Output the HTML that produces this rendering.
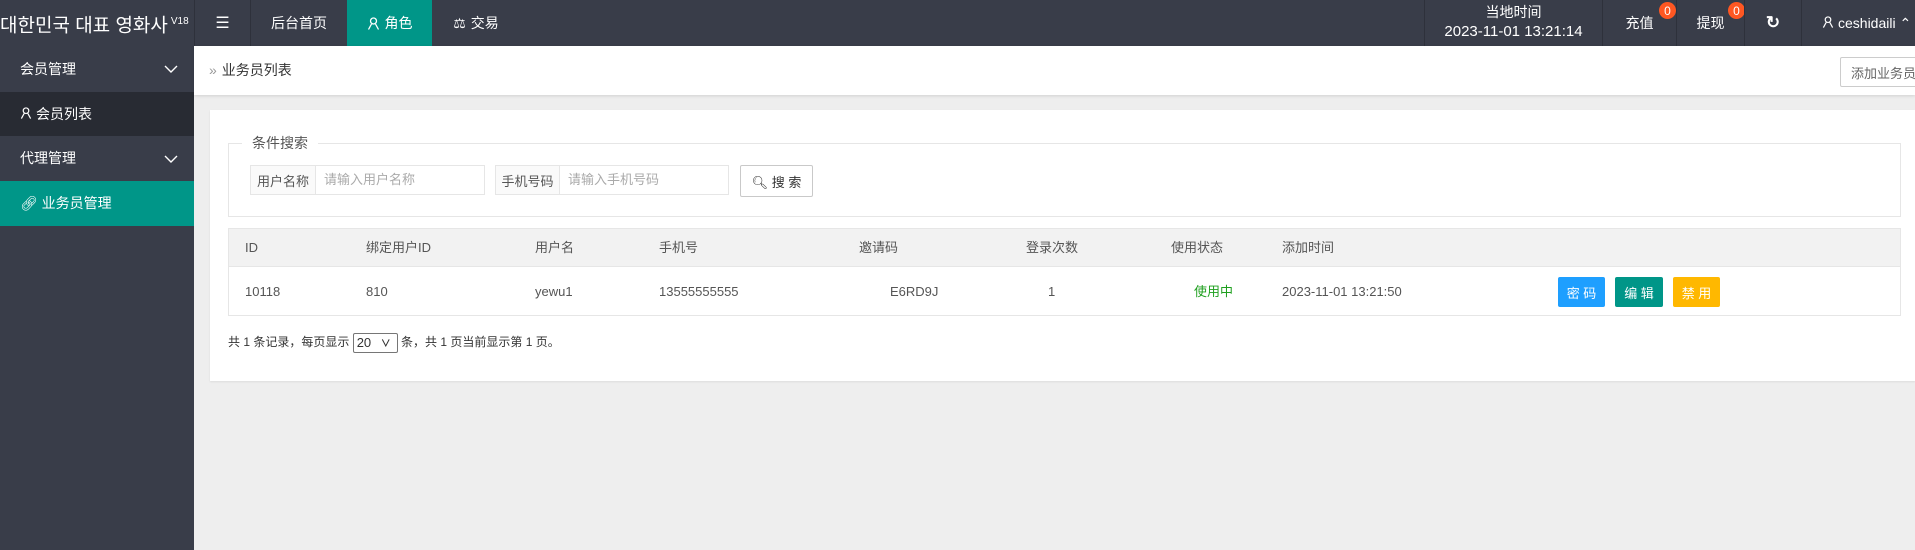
<!DOCTYPE html>
<html><head><meta charset="utf-8"><style>
*{box-sizing:border-box;margin:0;padding:0}
body{width:1915px;height:550px;overflow:hidden;background:#eeeeee;font-family:"Liberation Sans","Noto Sans CJK SC",sans-serif;font-size:14px;color:#333;position:relative}
.abs{position:absolute}
.top{left:0;top:0;width:1915px;height:46px;background:#393d49;color:#fff}
.side{left:0;top:46px;width:194px;height:504px;background:#393d49;color:#fff}
.c{display:flex;align-items:center;justify-content:center}
.sep{border-left:1px solid #2e313b}
.t span{line-height:16px;white-space:nowrap}
.chev{position:absolute;right:16px;top:50%;margin-top:-4px}
</style></head><body>
<div class="abs top">
  <div class="abs" style="left:0;top:0;width:194px;height:46px;line-height:44px;font-size:19px;font-family:'Liberation Sans','Noto Sans CJK KR',sans-serif;white-space:nowrap;overflow:hidden">대한민국 대표 영화사<sup style="font-size:10px;margin-left:3px">V18</sup></div>
  <div class="abs c sep" style="left:194px;top:0;width:56px;height:46px;font-size:16px">☰</div>
  <div class="abs c sep" style="left:250px;top:0;width:97px;height:46px">后台首页</div>
  <div class="abs c" style="left:347px;top:0;width:85px;height:46px;background:#009688"><svg width="13" height="13" viewBox="0 0 13 13" style="margin-right:5px"><circle cx="6.5" cy="4" r="3" fill="none" stroke="#fff" stroke-width="1.3"/><path d="M1.5 12.5 L4.5 7 M11.5 12.5 L8.5 7" stroke="#fff" stroke-width="1.3"/></svg>角色</div>
  <div class="abs c" style="left:432px;top:0;width:88px;height:46px"><span style="font-size:14px;margin-right:5px">⚖</span>交易</div>
  <div class="abs sep" style="left:1424px;top:0;width:178px;height:46px;text-align:center;font-size:14px;line-height:19px;padding-top:3px">当地时间<br><span style="font-size:15px">2023-11-01 13:21:14</span></div>
  <div class="abs c sep" style="left:1602px;top:0;width:74px;height:46px">充值</div>
  <div class="abs c" style="left:1659px;top:2px;width:17px;height:17px;border-radius:50%;background:#ff5722;font-size:12px">0</div>
  <div class="abs c sep" style="left:1676px;top:0;width:68px;height:46px">提现</div>
  <div class="abs c" style="left:1728px;top:2px;width:17px;height:17px;border-radius:50%;background:#ff5722;font-size:12px">0</div>
  <div class="abs c sep" style="left:1744px;top:0;width:57px;height:46px;font-size:17px;font-weight:bold">↻</div>
  <div class="abs sep" style="left:1801px;top:0;width:114px;height:46px;line-height:46px;padding-left:20px;white-space:nowrap"><svg width="12" height="12" viewBox="0 0 13 13" style="margin-right:4px"><circle cx="6.5" cy="4" r="3" fill="none" stroke="#fff" stroke-width="1.3"/><path d="M1.5 12.5 L4.5 7 M11.5 12.5 L8.5 7" stroke="#fff" stroke-width="1.3"/></svg>ceshidaili ⌃</div>
</div>
<div class="abs side">
  <div style="height:46px;line-height:46px;padding-left:20px;position:relative">会员管理<svg class="chev" width="14" height="8" viewBox="0 0 14 8"><path d="M1 1 L7 7 L13 1" fill="none" stroke="#fff" stroke-width="1.4"/></svg></div>
  <div style="height:44px;line-height:44px;padding-left:20px;background:#282b33"><svg width="12" height="12" viewBox="0 0 13 13" style="margin-right:4px"><circle cx="6.5" cy="4" r="3" fill="none" stroke="#fff" stroke-width="1.3"/><path d="M1.5 12.5 L4.5 7 M11.5 12.5 L8.5 7" stroke="#fff" stroke-width="1.3"/></svg>会员列表</div>
  <div style="height:45px;line-height:45px;padding-left:20px;position:relative">代理管理<svg class="chev" width="14" height="8" viewBox="0 0 14 8"><path d="M1 1 L7 7 L13 1" fill="none" stroke="#fff" stroke-width="1.4"/></svg></div>
  <div style="height:45px;line-height:45px;padding-left:20px;background:#009688">🔗︎ 业务员管理</div>
</div>
<div class="abs" style="left:194px;top:46px;width:1721px;height:49px;background:#fff;box-shadow:0 1px 3px rgba(0,0,0,.12)">
  <div class="abs" style="left:15px;top:0;line-height:49px;font-size:14px"><span style="color:#999;margin-right:5px">»</span>业务员列表</div>
  <div class="abs c" style="left:1646px;top:11px;width:80px;height:30px;border:1px solid #ccc;border-radius:2px;color:#666;font-size:13px;justify-content:flex-start;padding-left:10px">添加业务员</div>
</div>
<div class="abs" style="left:210px;top:110px;width:1705px;height:271px;background:#fff;box-shadow:0 1px 2px rgba(0,0,0,.08)">
  <div class="abs" style="left:18px;top:33px;width:1673px;height:74px;border:1px solid #e6e6e6"></div>
  <div class="abs" style="left:32px;top:24px;background:#fff;padding:0 10px;color:#555;font-size:14px;line-height:18px">条件搜索</div>
  <div class="abs c" style="left:40px;top:55px;width:66px;height:30px;border:1px solid #e6e6e6;background:#fafafa;font-size:13px;color:#555">用户名称</div>
  <div class="abs" style="left:105px;top:55px;width:170px;height:30px;border:1px solid #e6e6e6;line-height:28px;padding-left:8px;font-size:13px;color:#aaa">请输入用户名称</div>
  <div class="abs c" style="left:285px;top:55px;width:65px;height:30px;border:1px solid #e6e6e6;background:#fafafa;font-size:13px;color:#555">手机号码</div>
  <div class="abs" style="left:349px;top:55px;width:170px;height:30px;border:1px solid #e6e6e6;line-height:28px;padding-left:8px;font-size:13px;color:#aaa">请输入手机号码</div>
  <div class="abs c" style="left:530px;top:55px;width:73px;height:32px;border:1px solid #c9c9c9;border-radius:2px;font-size:13px">🔍︎&nbsp;搜 索</div>
  <div class="abs" style="left:18px;top:118px;width:1673px;height:88px;border:1px solid #e6e6e6">
    <div style="height:38px;background:#f2f2f2;border-bottom:1px solid #e6e6e6"></div>
  </div>
  <div class="abs t" style="left:0;top:118px;width:1705px;font-size:13px;color:#555">
    <span class="abs" style="left:35px;top:12px">ID</span><span class="abs" style="left:156px;top:12px">绑定用户ID</span><span class="abs" style="left:325px;top:12px">用户名</span><span class="abs" style="left:449px;top:12px">手机号</span><span class="abs" style="left:649px;top:12px">邀请码</span><span class="abs" style="left:816px;top:12px">登录次数</span><span class="abs" style="left:961px;top:12px">使用状态</span><span class="abs" style="left:1072px;top:12px">添加时间</span>
    <span class="abs" style="left:35px;top:56px">10118</span><span class="abs" style="left:156px;top:56px">810</span><span class="abs" style="left:325px;top:56px">yewu1</span><span class="abs" style="left:449px;top:56px">13555555555</span><span class="abs" style="left:680px;top:56px">E6RD9J</span><span class="abs" style="left:838px;top:56px">1</span><span class="abs" style="left:984px;top:56px;color:#1e9f1e">使用中</span><span class="abs" style="left:1072px;top:56px">2023-11-01 13:21:50</span>
  </div>
  <div class="abs c" style="left:1348px;top:167px;width:47px;height:30px;background:#1e9fff;color:#fff;border-radius:2px;font-size:13px">密 码</div>
  <div class="abs c" style="left:1405px;top:167px;width:48px;height:30px;background:#009688;color:#fff;border-radius:2px;font-size:13px">编 辑</div>
  <div class="abs c" style="left:1463px;top:167px;width:47px;height:30px;background:#ffb800;color:#fff;border-radius:2px;font-size:13px">禁 用</div>
  <div class="abs" style="left:18px;top:222px;font-size:12px;color:#333;line-height:20px">共 1 条记录，每页显示 <span style="display:inline-block;width:45px;height:20px;border:1px solid #767676;border-radius:2px;vertical-align:middle;line-height:18px;padding-left:3px;font-size:13px">20 <b style="font-size:10px;margin-left:6px">∨</b></span> 条，共 1 页当前显示第 1 页。</div>
</div>
</body></html>
